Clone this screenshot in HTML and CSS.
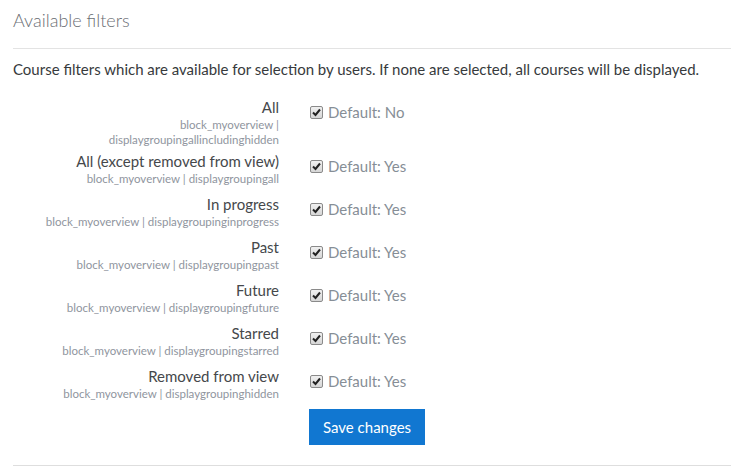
FILE: index.html
```html
<!DOCTYPE html>
<html lang="en">
<head>
  <meta charset="UTF-8">
  <title>Available filters</title>
  <link rel="stylesheet" href="styles.css">
</head>
<body>
  <div class="page">
    <h3 class="main-title">Available filters</h3>
    <p class="intro">Course filters which are available for selection by users. If none are selected, all courses will be displayed.</p>

    <form class="settings">
      <div class="setting">
        <div class="setting-label">
          <div class="name">All</div>
          <div class="key">block_myoverview |<br>displaygroupingallincludinghidden</div>
        </div>
        <div class="setting-value">
          <span class="check"><svg viewBox="0 0 13 13" width="13" height="13"><path d="M3 6.5 L5.5 9 L10 3.5" fill="none" stroke="#222" stroke-width="2"/></svg></span>
          <span class="default">Default: No</span>
        </div>
      </div>

      <div class="setting">
        <div class="setting-label">
          <div class="name">All (except removed from view)</div>
          <div class="key">block_myoverview | displaygroupingall</div>
        </div>
        <div class="setting-value">
          <span class="check"><svg viewBox="0 0 13 13" width="13" height="13"><path d="M3 6.5 L5.5 9 L10 3.5" fill="none" stroke="#222" stroke-width="2"/></svg></span>
          <span class="default">Default: Yes</span>
        </div>
      </div>

      <div class="setting">
        <div class="setting-label">
          <div class="name">In progress</div>
          <div class="key">block_myoverview | displaygroupinginprogress</div>
        </div>
        <div class="setting-value">
          <span class="check"><svg viewBox="0 0 13 13" width="13" height="13"><path d="M3 6.5 L5.5 9 L10 3.5" fill="none" stroke="#222" stroke-width="2"/></svg></span>
          <span class="default">Default: Yes</span>
        </div>
      </div>

      <div class="setting">
        <div class="setting-label">
          <div class="name">Past</div>
          <div class="key">block_myoverview | displaygroupingpast</div>
        </div>
        <div class="setting-value">
          <span class="check"><svg viewBox="0 0 13 13" width="13" height="13"><path d="M3 6.5 L5.5 9 L10 3.5" fill="none" stroke="#222" stroke-width="2"/></svg></span>
          <span class="default">Default: Yes</span>
        </div>
      </div>

      <div class="setting">
        <div class="setting-label">
          <div class="name">Future</div>
          <div class="key">block_myoverview | displaygroupingfuture</div>
        </div>
        <div class="setting-value">
          <span class="check"><svg viewBox="0 0 13 13" width="13" height="13"><path d="M3 6.5 L5.5 9 L10 3.5" fill="none" stroke="#222" stroke-width="2"/></svg></span>
          <span class="default">Default: Yes</span>
        </div>
      </div>

      <div class="setting">
        <div class="setting-label">
          <div class="name">Starred</div>
          <div class="key">block_myoverview | displaygroupingstarred</div>
        </div>
        <div class="setting-value">
          <span class="check"><svg viewBox="0 0 13 13" width="13" height="13"><path d="M3 6.5 L5.5 9 L10 3.5" fill="none" stroke="#222" stroke-width="2"/></svg></span>
          <span class="default">Default: Yes</span>
        </div>
      </div>

      <div class="setting">
        <div class="setting-label">
          <div class="name">Removed from view</div>
          <div class="key">block_myoverview | displaygroupinghidden</div>
        </div>
        <div class="setting-value">
          <span class="check"><svg viewBox="0 0 13 13" width="13" height="13"><path d="M3 6.5 L5.5 9 L10 3.5" fill="none" stroke="#222" stroke-width="2"/></svg></span>
          <span class="default">Default: Yes</span>
        </div>
      </div>

      <div class="actions">
        <button type="submit" class="btn-save">Save changes</button>
      </div>
    </form>
  </div>
</body>
</html>
```

FILE: styles.css
```css
/* Page */
body {
    margin: 0;
    font-family: 'Lato', 'Open Sans', sans-serif;
    color: #373a3c;
    background: #fff;
}

.page {
    padding: 0 0 0 13px;
}

.main-title {
    margin: 0;
    padding-top: 8px;
    height: 40px;
    font-size: 18px;
    font-weight: 300;
    line-height: 24px;
    color: #6a6e73;
    border-bottom: 1px solid #e3e3e3;
}

.intro {
    margin: 10px 0 0;
    font-size: 15px;
    line-height: 20px;
}

/* Settings rows */
.settings {
    margin-top: 18px;
    border-bottom: 1px solid #dedede;
    padding-bottom: 20px;
}

.setting {
    display: grid;
    grid-template-columns: 266px 1fr;
    column-gap: 31px;
}

.setting-label {
    text-align: right;
    padding-bottom: 4px;
}

.name {
    font-size: 15px;
    line-height: 20px;
    color: #45484b;
}

.key {
    font-size: 11.5px;
    line-height: 15px;
    color: #8f959e;
}

.setting-value {
    display: flex;
    align-items: center;
    align-self: start;
    gap: 5px;
    box-sizing: border-box;
    height: 43px;
    padding: 5px 0 18px;
}

.check {
    display: inline-flex;
    width: 11px;
    height: 11px;
    border: 1px solid #8a8a8a;
    border-radius: 2px;
    background: linear-gradient(#f0f0f0, #d6d6d6);
    overflow: hidden;
    align-items: center;
    justify-content: center;
}

.check svg {
    flex: none;
}

.default {
    font-size: 15px;
    color: #868e96;
}

/* Save button */
.actions {
    padding-left: 296px;
}

.btn-save {
    height: 36px;
    padding: 0 14px;
    border: none;
    border-radius: 0;
    background: #1177d1;
    color: #fff;
    font-family: inherit;
    font-size: 15px;
}
```
